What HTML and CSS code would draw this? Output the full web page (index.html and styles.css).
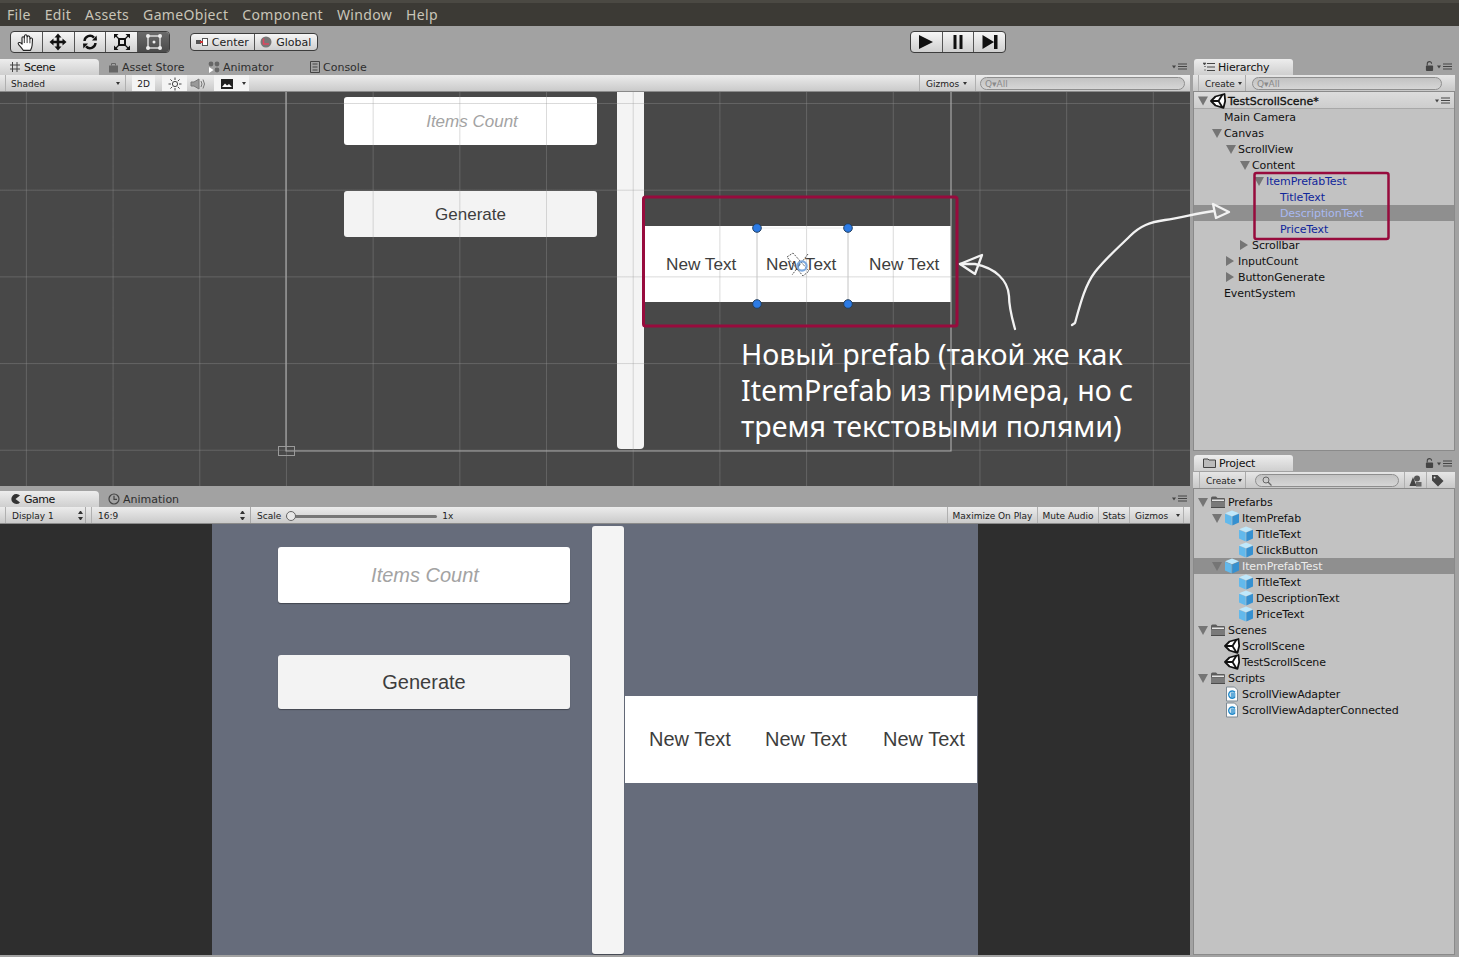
FILE: index.html
```html
<!DOCTYPE html>
<html lang="en">
<head>
<meta charset="utf-8">
<title>Unity Editor</title>
<link rel="stylesheet" href="styles.css">
</head>
<body>
<svg class="sprite" width="0" height="0" aria-hidden="true">
  <symbol id="unity" viewBox="0 0 16 16">
    <path d="M1 8 L5.5 3.5 L14.5 1 L15.2 8 L13.5 14.8 L5.5 12.5 Z" fill="#fff" stroke="#111" stroke-width="1.8" stroke-linejoin="round"/>
    <path d="M8.5 8 L1.5 8 M8.5 8 L12.5 1.5 M8.5 8 L12.5 14.5" stroke="#111" stroke-width="1.8" fill="none"/>
  </symbol>
  <symbol id="cube" viewBox="0 0 16 16">
    <path d="M8 0.5 L15 3.2 L8 6.2 L1 3.2 Z" fill="#bfe8fb"/>
    <path d="M1 3.7 L7.7 6.6 L7.7 15.5 L1 12.4 Z" fill="#62b9ec"/>
    <path d="M15 3.7 L8.3 6.6 L8.3 15.5 L15 12.4 Z" fill="#3590d0"/>
  </symbol>
  <symbol id="folder" viewBox="0 0 16 16">
    <path d="M1 4 Q1 2.5 2.5 2.5 L6 2.5 L7.5 4 L14 4 Q15 4 15 5 L15 14 L1 14 Z" fill="#5c5c5c"/>
    <path d="M2 5.5 H14 V7 H2 Z" fill="#e4e4e4"/>
    <path d="M1 7.5 H15 V14 H1 Z" fill="#7a7a7a"/>
    <path d="M1 13 H15 V14 H1 Z" fill="#4c4c4c"/>
  </symbol>
  <symbol id="script" viewBox="0 0 16 16">
    <path d="M2.5 1 H10.5 L13.5 4 V15 H2.5 Z" fill="#fbfbfb" stroke="#7d8a94"/>
    <path d="M11 6.2 A3.6 3.6 0 1 0 11 11" fill="none" stroke="#1f88c9" stroke-width="1.4"/>
    <path d="M8 6 V12 M10 6 V12 M6.6 8 H11.6 M6.6 10 H11.6" stroke="#1f88c9" stroke-width=".9"/>
  </symbol>
  <symbol id="menu" viewBox="0 0 16 8">
    <path d="M0 2.5 H4 L2 5.5 Z" fill="#444"/>
    <path d="M6 1 H15 M6 3.5 H15 M6 6 H15" stroke="#444" stroke-width="1"/>
  </symbol>
  <symbol id="lock" viewBox="0 0 10 11">
    <path d="M2.5 5 V3 A2.4 2.4 0 0 1 7.3 3" fill="none" stroke="#444" stroke-width="1.2"/>
    <rect x="1" y="5" width="8" height="6" rx="1" fill="#444"/>
  </symbol>
</svg>

<div class="app">
  <nav class="menubar">
    <span class="mi">File</span><span class="mi">Edit</span><span class="mi">Assets</span><span class="mi">GameObject</span><span class="mi">Component</span><span class="mi">Window</span><span class="mi">Help</span>
  </nav>

  <header class="toolbar">
    <div class="btn-group tools">
      <button class="tb">
        <svg width="20" height="19" viewBox="0 0 17 17"><path d="M6 15.5 C4.5 13 1.5 10.5 1.5 9.3 C1.5 8 3.8 8.4 5 10 L4.9 4.4 C4.9 3 6.9 3 7 4.4 L7.2 2.6 C7.4 1.2 9.3 1.3 9.4 2.8 L9.6 3.4 C10 2.2 11.9 2.4 11.9 3.9 L12.1 5.2 C12.5 4 14.4 4.3 14.3 5.8 L14 11 C13.8 13 13 14.5 12.5 15.5 Z" fill="#fff" stroke="#222" stroke-width="1" stroke-linejoin="round"/><path d="M7 4.4 V9 M9.5 3 V9 M12 5 V9.2" stroke="#222" stroke-width=".8" fill="none"/></svg>
      </button>
      <button class="tb">
        <svg width="18" height="18" viewBox="0 0 18 18"><path d="M9 0.5 L12.5 4.5 H10.3 V7.7 H13.5 V5.5 L17.5 9 L13.5 12.5 V10.3 H10.3 V13.5 H12.5 L9 17.5 L5.5 13.5 H7.7 V10.3 H4.5 V12.5 L0.5 9 L4.5 5.5 V7.7 H7.7 V4.5 H5.5 Z" fill="#111"/></svg>
      </button>
      <button class="tb">
        <svg width="16" height="16" viewBox="0 0 16 16"><path d="M2.5 7 A5.5 5.5 0 0 1 12 3.6" fill="none" stroke="#111" stroke-width="2.4"/><path d="M10 6.4 L15 6.6 L14.6 1.4 Z" fill="#111"/><path d="M13.5 9 A5.5 5.5 0 0 1 4 12.4" fill="none" stroke="#111" stroke-width="2.4"/><path d="M6 9.6 L1 9.4 L1.4 14.6 Z" fill="#111"/></svg>
      </button>
      <button class="tb">
        <svg width="18" height="18" viewBox="0 0 18 18"><rect x="6" y="6" width="6" height="6" fill="none" stroke="#111" stroke-width="2"/><path d="M1 1 H5.5 L1 5.5 Z M17 1 V5.5 L12.5 1 Z M1 17 V12.5 L5.5 17 Z M17 17 H12.5 L17 12.5 Z" fill="#111"/><path d="M2.5 2.5 L6 6 M15.5 2.5 L12 6 M2.5 15.5 L6 12 M15.5 15.5 L12 12" stroke="#111" stroke-width="1.2"/></svg>
      </button>
      <button class="tb active">
        <svg width="18" height="18" viewBox="0 0 18 18"><rect x="3" y="3" width="12" height="12" fill="none" stroke="#eee" stroke-width="1.3"/><circle cx="3" cy="3" r="2" fill="#eee"/><circle cx="15" cy="3" r="2" fill="#eee"/><circle cx="3" cy="15" r="2" fill="#eee"/><circle cx="15" cy="15" r="2" fill="#eee"/><circle cx="9" cy="9" r="1.5" fill="#eee"/></svg>
      </button>
    </div>

    <div class="btn-group pivot">
      <button class="tb2 first">
        <svg width="12" height="8" viewBox="0 0 12 8"><rect x="0" y="2" width="5" height="4" fill="#555"/><rect x="6.5" y="0.5" width="5" height="7" fill="#fff" stroke="#555"/><rect x="4" y="3" width="3" height="2" fill="#c33"/></svg>
        Center
      </button>
      <button class="tb2">
        <svg width="12" height="12" viewBox="0 0 12 12"><circle cx="6" cy="6" r="5.5" fill="#777"/><path d="M3.5 2.5 V8 H9" stroke="#e0455f" stroke-width="1.6" fill="none"/></svg>
        Global
      </button>
    </div>

    <div class="btn-group play">
      <button class="tb3"><svg width="16" height="14" viewBox="0 0 16 14"><path d="M1 0 L15 7 L1 14 Z" fill="#111"/></svg></button>
      <button class="tb3"><svg width="10" height="14" viewBox="0 0 10 14"><path d="M0.5 0 H3.5 V14 H0.5 Z M6.5 0 H9.5 V14 H6.5 Z" fill="#111"/></svg></button>
      <button class="tb3"><svg width="16" height="14" viewBox="0 0 16 14"><path d="M0.5 0 L12 7 L0.5 14 Z M12 0 H15.5 V14 H12 Z" fill="#111"/></svg></button>
    </div>
  </header>

  <main class="dock">
    <div class="col-left">
      <section class="pane scene-pane">
        <div class="tabs">
          <div class="tab on">
            <svg class="ti" width="12" height="12" viewBox="0 0 12 12"><path d="M3.5 1 V11 M8 1 V11 M1 4 H11 M1 8 H11" stroke="#444" stroke-width="1"/></svg>Scene
          </div>
          <div class="tab">
            <svg class="ti" width="11" height="11" viewBox="0 0 11 11"><path d="M1 3.5 H10 V10.5 H1 Z" fill="#666"/><path d="M3.5 3.5 V1.5 H7.5 V3.5" fill="none" stroke="#666"/></svg>Asset Store
          </div>
          <div class="tab anim">
            <svg class="ti" width="12" height="12" viewBox="0 0 12 12"><circle cx="3" cy="3" r="2.4" fill="#666"/><circle cx="9" cy="3" r="2.4" fill="#666"/><circle cx="9" cy="9" r="2.4" fill="#666"/><path d="M1 6 L1 12 L5.5 9 Z" fill="#fff"/></svg>Animator
          </div>
          <div class="tab">
            <svg class="ti" width="10" height="12" viewBox="0 0 10 12"><path d="M0.5 0.5 H9.5 V11.5 H0.5 Z" fill="none" stroke="#444"/><path d="M2.5 3 H7.5 M2.5 6 H7.5 M2.5 9 H7.5" stroke="#444"/></svg>Console
          </div>
          <svg class="panemenu" width="16" height="8"><use href="#menu"/></svg>
        </div>
        <div class="bar">
          <div class="bcell shaded">Shaded<i class="caret"></i></div>
          <div class="bcell two">2D</div>
          <div class="bcell sun">
            <svg width="14" height="14" viewBox="0 0 14 14"><circle cx="7" cy="7" r="2.6" fill="none" stroke="#444"/><path d="M7 0.5 V3 M7 11 V13.5 M0.5 7 H3 M11 7 H13.5 M2.4 2.4 L4.2 4.2 M9.8 9.8 L11.6 11.6 M2.4 11.6 L4.2 9.8 M9.8 4.2 L11.6 2.4" stroke="#444"/></svg>
          </div>
          <div class="bcell audio">
            <svg width="16" height="12" viewBox="0 0 16 12"><path d="M1 4 H4 L9 1 V11 L4 8 H1 Z" fill="#999" stroke="#777"/><path d="M11 3 Q13 6 11 9 M13 1.5 Q16 6 13 10.5" fill="none" stroke="#777"/></svg>
          </div>
          <div class="bcell img">
            <svg width="12" height="10" viewBox="0 0 12 10"><rect width="12" height="10" fill="#222"/><path d="M1 8 L4 4.5 L6 6.5 L8 5 L11 8 Z" fill="#fff"/></svg>
            <i class="caret sep"></i>
          </div>
          <div class="bcell gizmos">Gizmos<i class="caret"></i></div>
          <div class="search s-scene"><span class="q">Q▾All</span></div>
        </div>
        <div class="canvas scene">
          <div class="sc-form">
            <div class="sc-input">Items Count</div>
            <div class="sc-btn">Generate</div>
          </div>
          <div class="sc-scroll"></div>
          <div class="sc-item"><span>New Text</span><span>New Text</span><span>New Text</span></div>
          <div class="grid"></div>
          <p class="note">Новый prefab (такой же как<br>ItemPrefab из примера, но с<br>тремя текстовыми полями)</p>
        </div>
      </section>

      <section class="pane game-pane">
        <div class="tabs">
          <div class="tab on">
            <svg class="ti" width="12" height="12" viewBox="0 0 12 12"><path d="M11 2.6 A5 5 0 1 0 11 9.4 L6.5 6 Z" fill="#333"/></svg>Game
          </div>
          <div class="tab">
            <svg class="ti" width="12" height="12" viewBox="0 0 12 12"><circle cx="6" cy="6" r="5" fill="none" stroke="#444" stroke-width="1.2"/><path d="M6 2.8 V6.3 H9" fill="none" stroke="#444" stroke-width="1.2"/></svg>Animation
          </div>
          <svg class="panemenu" width="16" height="8"><use href="#menu"/></svg>
        </div>
        <div class="bar">
          <div class="bcell display">Display 1<i class="updown"></i></div>
          <div class="bcell ratio">16:9<i class="updown"></i></div>
          <div class="scale"><span>Scale</span><div class="slider"><i class="knob"></i></div><span>1x</span></div>
          <div class="bcell maxi">Maximize On Play</div>
          <div class="bcell mute">Mute Audio</div>
          <div class="bcell stats">Stats</div>
          <div class="bcell gz2">Gizmos<i class="caret sep"></i></div>
        </div>
        <div class="canvas game">
          <div class="viewport">
            <div class="g-form">
              <div class="g-input">Items Count</div>
              <div class="g-btn">Generate</div>
            </div>
            <div class="g-scroll"></div>
            <div class="g-item"><span>New Text</span><span>New Text</span><span>New Text</span></div>
          </div>
        </div>
      </section>
    </div>

    <div class="col-right">
      <section class="pane hier-pane">
        <div class="tabs">
          <div class="tab on rt">
            <svg class="ti" width="12" height="10" viewBox="0 0 12 10"><path d="M4 1.5 H12 M4 5 H12 M4 8.5 H12" stroke="#444"/><path d="M0 1 H3 L1.5 3 Z M1 4.5 H3 M1 8 H3" fill="#444" stroke="#444" stroke-width=".6"/></svg>Hierarchy
          </div>
          <svg class="lock" width="9" height="10"><use href="#lock"/></svg>
          <svg class="panemenu r" width="16" height="8"><use href="#menu"/></svg>
        </div>
        <div class="bar rbar">
          <div class="bcell create">Create<i class="caret"></i></div>
          <div class="search s-hier"><span class="q">Q▾All</span></div>
        </div>
        <div class="body">
          <div class="scenehead">
            <i class="tw d"></i>
            <svg class="ic" width="16" height="16"><use href="#unity"/></svg>
            <b>TestScrollScene*</b>
            <svg class="panemenu h" width="16" height="8"><use href="#menu"/></svg>
          </div>
          <div class="row l1"><i class="tw"></i>Main Camera</div>
          <div class="row l1"><i class="tw d"></i>Canvas</div>
          <div class="row l2"><i class="tw d"></i>ScrollView</div>
          <div class="row l3"><i class="tw d"></i>Content</div>
          <div class="row l4 pf"><i class="tw d"></i>ItemPrefabTest</div>
          <div class="row l5 pf"><i class="tw"></i>TitleText</div>
          <div class="row l5 pf sel"><i class="tw"></i>DescriptionText</div>
          <div class="row l5 pf"><i class="tw"></i>PriceText</div>
          <div class="row l3"><i class="tw r"></i>Scrollbar</div>
          <div class="row l2"><i class="tw r"></i>InputCount</div>
          <div class="row l2"><i class="tw r"></i>ButtonGenerate</div>
          <div class="row l1"><i class="tw"></i>EventSystem</div>
        </div>
      </section>

      <section class="pane proj-pane">
        <div class="tabs">
          <div class="tab on rt">
            <svg class="ti" width="13" height="10" viewBox="0 0 13 10"><path d="M0.5 1 H5 L6 2 H12.5 V9.5 H0.5 Z" fill="#bbb" stroke="#444"/></svg>Project
          </div>
          <svg class="lock" width="9" height="10"><use href="#lock"/></svg>
          <svg class="panemenu r" width="16" height="8"><use href="#menu"/></svg>
        </div>
        <div class="bar rbar">
          <div class="bcell create p">Create<i class="caret"></i></div>
          <div class="search s-proj">
            <svg width="10" height="10" viewBox="0 0 10 10"><circle cx="4" cy="4" r="3" fill="none" stroke="#666"/><path d="M6 6 L9.5 9.5" stroke="#666" stroke-width="1.2"/></svg>
          </div>
          <div class="bcell sq first-sq">
            <svg width="13" height="12" viewBox="0 0 13 12"><circle cx="8" cy="3.4" r="3" fill="#555"/><path d="M4 2 L7.5 11 H0.5 Z" fill="#444"/><rect x="7" y="7" width="5.5" height="4.5" fill="#666"/></svg>
          </div>
          <div class="bcell sq">
            <svg width="13" height="13" viewBox="0 0 13 13"><path d="M1 1 H6.5 L12.5 7 L7 12.5 L1 6.5 Z" fill="#444"/><circle cx="3.6" cy="3.6" r="1" fill="#ddd"/></svg>
          </div>
        </div>
        <div class="body tree">
          <div class="row t0"><i class="tw d"></i><svg class="ic" width="16" height="16"><use href="#folder"/></svg>Prefarbs</div>
          <div class="row t1"><i class="tw d"></i><svg class="ic" width="16" height="16"><use href="#cube"/></svg>ItemPrefab</div>
          <div class="row t2"><i class="tw"></i><svg class="ic" width="16" height="16"><use href="#cube"/></svg>TitleText</div>
          <div class="row t2"><i class="tw"></i><svg class="ic" width="16" height="16"><use href="#cube"/></svg>ClickButton</div>
          <div class="row t1 sel"><i class="tw d"></i><svg class="ic" width="16" height="16"><use href="#cube"/></svg>ItemPrefabTest</div>
          <div class="row t2"><i class="tw"></i><svg class="ic" width="16" height="16"><use href="#cube"/></svg>TitleText</div>
          <div class="row t2"><i class="tw"></i><svg class="ic" width="16" height="16"><use href="#cube"/></svg>DescriptionText</div>
          <div class="row t2"><i class="tw"></i><svg class="ic" width="16" height="16"><use href="#cube"/></svg>PriceText</div>
          <div class="row t0"><i class="tw d"></i><svg class="ic" width="16" height="16"><use href="#folder"/></svg>Scenes</div>
          <div class="row t1"><i class="tw"></i><svg class="ic" width="16" height="16"><use href="#unity"/></svg>ScrollScene</div>
          <div class="row t1"><i class="tw"></i><svg class="ic" width="16" height="16"><use href="#unity"/></svg>TestScrollScene</div>
          <div class="row t0"><i class="tw d"></i><svg class="ic" width="16" height="16"><use href="#folder"/></svg>Scripts</div>
          <div class="row t1"><i class="tw"></i><svg class="ic" width="16" height="16"><use href="#script"/></svg>ScrollViewAdapter</div>
          <div class="row t1"><i class="tw"></i><svg class="ic" width="16" height="16"><use href="#script"/></svg>ScrollViewAdapterConnected</div>
        </div>
      </section>
    </div>
  </main>

  <svg class="overlay" width="1459" height="957" viewBox="0 0 1459 957" aria-hidden="true">
    <!-- canvas bounds -->
    <path d="M286 92 V451 H951 V92" fill="none" stroke="#a8a8a8" stroke-width="1.2"/>
    <rect x="278.5" y="446.5" width="16" height="9" fill="none" stroke="#9a9a9a"/>
    <!-- rect tool -->
    <path d="M757 228 V304 M848 228 V304" stroke="#c4c4c4" stroke-width="1"/>
    <path d="M757 228 H848" stroke="#ececec" stroke-width="1"/>
    <g fill="#2c7be5" stroke="#25405f" stroke-width="1">
      <circle cx="757" cy="228" r="4.3"/><circle cx="848" cy="228" r="4.3"/><circle cx="757" cy="304" r="4.3"/><circle cx="848" cy="304" r="4.3"/>
    </g>
    <!-- pivot -->
    <path d="M787 257 L793 253 L809 271 L803 276 Z M808 254 L792 275" fill="none" stroke="#444" stroke-width=".9" stroke-dasharray="2 1.2"/>
    <circle cx="802" cy="266" r="4.6" fill="none" stroke="#7ea9dd" stroke-width="2.2"/>
    <!-- highlights -->
    <rect x="643.5" y="197" width="313.5" height="129" rx="2" fill="none" stroke="#970b3d" stroke-width="3"/>
    <rect x="1254.5" y="173" width="134" height="66" rx="2" fill="none" stroke="#970b3d" stroke-width="2.5"/>
    <!-- hand-drawn arrows -->
    <g fill="none" stroke="#f2f2f2" stroke-width="2.3" stroke-linejoin="round" stroke-linecap="round">
      <path d="M1015 329 C1012 318 1009 308 1009 296 C1008 280 995 268 975 264 L960 264"/>
      <path d="M960 264 L982 255 L975 274 Z"/>
      <path d="M1072 325 L1075 323 C1080 305 1085 285 1095 272 C1106 258 1118 248 1130 236 C1140 226 1150 222 1165 220 C1182 218 1196 213 1214 211"/>
      <path d="M1229 212 L1213 204 L1216 218 Z"/>
    </g>
  </svg>
</div>
</body>
</html>
```

FILE: styles.css
```css
* { box-sizing: border-box; }
html, body { margin: 0; padding: 0; }
body { background: #a2a2a2; font-family: "DejaVu Sans", sans-serif; overflow: hidden; }
.sprite { position: absolute; }
button { font: inherit; margin: 0; color: inherit; }

.app { position: relative; width: 1459px; height: 957px; display: flex; flex-direction: column; background: #a2a2a2; overflow: hidden; }

/* menu */
.menubar { height: 26px; flex: none; display: flex; align-items: center; padding: 0 0 0 7px; gap: 14px; background: #3c3a35; border-top: 3px solid #4b4943; color: #c9c5b8; font: 14px "Noto Sans", sans-serif; letter-spacing: .33px; }

/* main toolbar */
.toolbar { height: 32px; flex: none; display: flex; align-items: center; padding: 0 0 0 10px; background: #a2a2a2; }
.btn-group { display: flex; border: 1px solid #3c3c3c; border-radius: 4px; overflow: hidden; background: linear-gradient(#f6f6f6, #cfcfcf); }
.tools { height: 22px; width: 160px; }
.tb { flex: 1; border: 0; border-right: 1px solid #555; background: transparent; padding: 0; display: flex; align-items: center; justify-content: center; }
.tb:last-child { border-right: 0; }
.tb.active { background: linear-gradient(#6a6a6a, #4a4a4a); }
.pivot { height: 18px; width: 128px; margin-left: 20px; }
.tb2 { flex: 1; border: 0; border-right: 1px solid #555; background: transparent; padding: 0; display: flex; align-items: center; justify-content: center; gap: 4px; font-size: 11px; color: #222; }
.tb2:last-child { border-right: 0; }
.play { height: 22px; width: 96px; margin-left: 592px; }
.tb3 { flex: 1; border: 0; border-right: 1px solid #555; background: transparent; padding: 0; display: flex; align-items: center; justify-content: center; }
.tb3:last-child { border-right: 0; }

/* dock */
.dock { flex: 1; display: flex; min-height: 0; }
.col-left { width: 1190px; flex: none; display: flex; flex-direction: column; }
.col-right { width: 262px; margin-left: 3px; flex: none; display: flex; flex-direction: column; }

.pane { display: flex; flex-direction: column; min-height: 0; }
.scene-pane { height: 428px; flex: none; }
.game-pane { margin-top: 4px; height: 465px; flex: none; }
.hier-pane { height: 393px; flex: none; }
.proj-pane { margin-top: 3px; height: 501px; flex: none; }
.proj-pane .tabs { height: 18px; }
.proj-pane .tab { margin-bottom: 1px; }

.tabs { height: 17px; flex: none; display: flex; align-items: flex-end; color: #2e2e2e; font-size: 11px; }
.tab { width: 100px; height: 16px; flex: none; display: flex; align-items: center; padding-left: 9px; white-space: nowrap; }
.tab.anim { width: 102px; }
.tab.on { width: 99px; background: linear-gradient(#ededed, #cfcfcf); border-radius: 0 4px 0 0; color: #111; letter-spacing: -.5px; }
.tab.rt { margin-left: 1px; border-radius: 3px 3px 0 0; letter-spacing: -.2px; }
.ti { margin-right: 3px; flex: none; }
.panemenu { margin: 0 2px 4px auto; flex: none; }
.panemenu.r { margin: 0 2px 4px 3px; }
.lock { margin: 0 0 4px auto; flex: none; }

.bar { height: 17px; flex: none; display: flex; padding-left: 5px; background: linear-gradient(#ececec, #cacaca); border-bottom: 1px solid #8a8a8a; color: #222; font-size: 9px; }
.bcell { height: 100%; display: flex; align-items: center; padding-top: 1px; border-left: 1px solid #b0b0b0; position: relative; flex: none; }
.caret { width: 0; height: 0; border-left: 2.5px solid transparent; border-right: 2.5px solid transparent; border-top: 3px solid #333; margin-left: auto; }
.updown { margin-left: auto; width: 5px; height: 9px; display: flex; flex-direction: column; justify-content: space-between; }
.updown::before { content: ""; border-left: 2.5px solid transparent; border-right: 2.5px solid transparent; border-bottom: 3px solid #333; }
.updown::after { content: ""; border-left: 2.5px solid transparent; border-right: 2.5px solid transparent; border-top: 3px solid #333; }
.shaded { width: 121px; padding-left: 5px; padding-right: 5px; border-right: 1px solid #b0b0b0; }
.two { width: 23px; margin-left: 6px; justify-content: center; background: #f4f4f4; border: 0; }
.sun { width: 25px; margin-left: 7px; justify-content: center; background: #f4f4f4; border: 0; }
.audio { width: 22px; justify-content: center; border: 0; }
.img { width: 35px; margin-left: 5px; padding-left: 7px; background: #f4f4f4; border: 0; }
.caret.sep { margin-right: 3px; }
.gizmos { width: 57px; margin-left: 670px; padding-left: 6px; padding-right: 8px; border-right: 1px solid #b0b0b0; }
.search { margin-top: 2px; height: 13px; border: 1px solid #8e8e8e; border-radius: 7px; background: linear-gradient(#c2c2c2, #d6d6d6); color: #8a8a8a; display: flex; align-items: center; padding-left: 4px; font-size: 9px; flex: none; }
.s-scene { width: 205px; margin-left: 4px; }

.canvas { flex: 1; min-height: 0; position: relative; overflow: hidden; }

/* scene */
.scene { background: #484848; display: flex; align-items: flex-start; padding-left: 344px; font-family: "Liberation Sans", sans-serif; }
.sc-form { width: 253px; padding-top: 5px; flex: none; }
.sc-input, .sc-btn { display: flex; align-items: center; justify-content: center; border-radius: 3px; font-size: 17px; padding-top: 2px; }
.sc-input { height: 48px; background: #fff; color: #a3a3a3; font-style: italic; padding-left: 3px; }
.sc-btn { height: 46px; margin-top: 46px; background: #f3f3f3; color: #3d3d3d; }
.sc-scroll { width: 27px; height: 357px; margin-left: 20px; background: #f4f4f4; border-radius: 0 0 4px 4px; flex: none; }
.sc-item { width: 307px; height: 76px; margin-top: 134px; background: #fff; flex: none; display: grid; grid-template-columns: 100px 103px auto; align-items: center; padding-left: 22px; font-size: 17.2px; color: #3d3d3d; white-space: nowrap; }
.grid { position: absolute; inset: 0; background-image: linear-gradient(to right, rgba(150,150,150,.35) 1px, transparent 1px), linear-gradient(to bottom, rgba(150,150,150,.35) 1px, transparent 1px); background-size: 86.7px 86.7px; background-position: 25.9px 11px; }
.note { position: absolute; left: 741px; top: 244px; margin: 0; color: #fff; font: 28.6px/36px "Noto Sans", sans-serif; white-space: nowrap; }

/* game */
.maxi, .mute, .stats, .gz2 { justify-content: center; }
.display { width: 81px; padding-left: 6px; padding-right: 2px; border-right: 1px solid #a8a8a8; }
.ratio { width: 160px; margin-left: 5px; padding-left: 6px; padding-right: 5px; border-right: 1px solid #a8a8a8; }
.scale { width: 696px; display: flex; align-items: center; padding: 2px 0 0 6px; gap: 5px; flex: none; }
.slider { width: 151px; height: 3px; background: #777; border-radius: 2px; position: relative; }
.knob { position: absolute; left: 0; top: -3.5px; width: 10px; height: 10px; border-radius: 50%; background: #e8e8e8; border: 1px solid #666; }
.maxi { width: 90px; }
.mute { width: 61px; }
.stats { width: 31px; }
.gz2 { width: 55px; padding-left: 5px; border-right: 1px solid #b0b0b0; justify-content: flex-start; }
.game { background: #2e2e2e; padding-left: 212px; font-family: "Liberation Sans", sans-serif; }
.viewport { width: 766px; height: 100%; background: #666c7b; display: flex; align-items: flex-start; }
.g-form { width: 292px; margin-left: 66px; padding-top: 23px; flex: none; }
.g-input, .g-btn { display: flex; align-items: center; justify-content: center; border-radius: 3px; font-size: 20px; box-shadow: 0 1px 1px rgba(0,0,0,.35); }
.g-input { height: 56px; background: #fff; color: #a3a3a3; font-style: italic; padding-left: 2px; }
.g-btn { height: 54px; margin-top: 52px; background: #f3f3f3; color: #3d3d3d; }
.g-scroll { width: 32px; height: 428px; margin: 2px 0 0 22px; background: #f4f4f4; border-radius: 3px; flex: none; box-shadow: 0 1px 1px rgba(0,0,0,.35); }
.g-item { width: 352px; height: 87px; margin: 172px 0 0 1px; background: #fff; flex: none; display: grid; grid-template-columns: 116px 118px auto; align-items: center; padding-left: 24px; font-size: 20px; color: #3d3d3d; white-space: nowrap; }

/* right panels */
.rbar { padding-left: 0; background: linear-gradient(#e6e6e6, #c8c8c8); }
.create { width: 48px; margin-left: 5px; padding-left: 6px; padding-right: 3px; border-right: 1px solid #aaa; }
.create.p { width: 47px; margin-left: 6px; }
.s-hier { width: 190px; margin-left: 6px; }
.s-proj { width: 144px; margin-left: 9px; padding-left: 6px; }
.sq { width: 22px; justify-content: center; }
.first-sq { margin-left: 5px; }
.body { flex: 1; background: #c2c2c2; border: 1px solid #8a8a8a; border-top: 0; font-size: 11px; color: #111; letter-spacing: -.1px; }
.scenehead { height: 17px; display: flex; align-items: center; padding: 1px 0 0 4px; background: linear-gradient(#dcdcdc, #cdcdcd); border-bottom: 1px solid #a8a8a8; }
.scenehead b { font-weight: 400; font-size: 11px; letter-spacing: 0; margin-top: 2px; -webkit-text-stroke: .3px #111; }
.scenehead .panemenu { margin: 0 3px 0 auto; }
.row { height: 16px; display: flex; align-items: center; white-space: nowrap; }
.tw { width: 12px; height: 10px; flex: none; display: block; }
.tw.d { background: #757575; clip-path: polygon(0 10%, 83% 10%, 42% 100%); }
.tw.r { background: #757575; clip-path: polygon(0 0, 67% 50%, 0 100%); }
.ic { flex: none; margin-right: 2px; }
.l1 { padding-left: 18px; }
.l2 { padding-left: 32px; }
.l3 { padding-left: 46px; }
.l4 { padding-left: 60px; }
.l5 { padding-left: 74px; }
.pf { color: #10269a; }
.row.sel { background: #8f8f8f; }
.pf.sel { color: #a9b9f2; }
.tree { padding-top: 5px; }
.t0 { padding-left: 4px; }
.t1 { padding-left: 18px; }
.t2 { padding-left: 32px; }
.tree .sel { color: #ececec; }

.overlay { position: absolute; left: 0; top: 0; pointer-events: none; }
```
